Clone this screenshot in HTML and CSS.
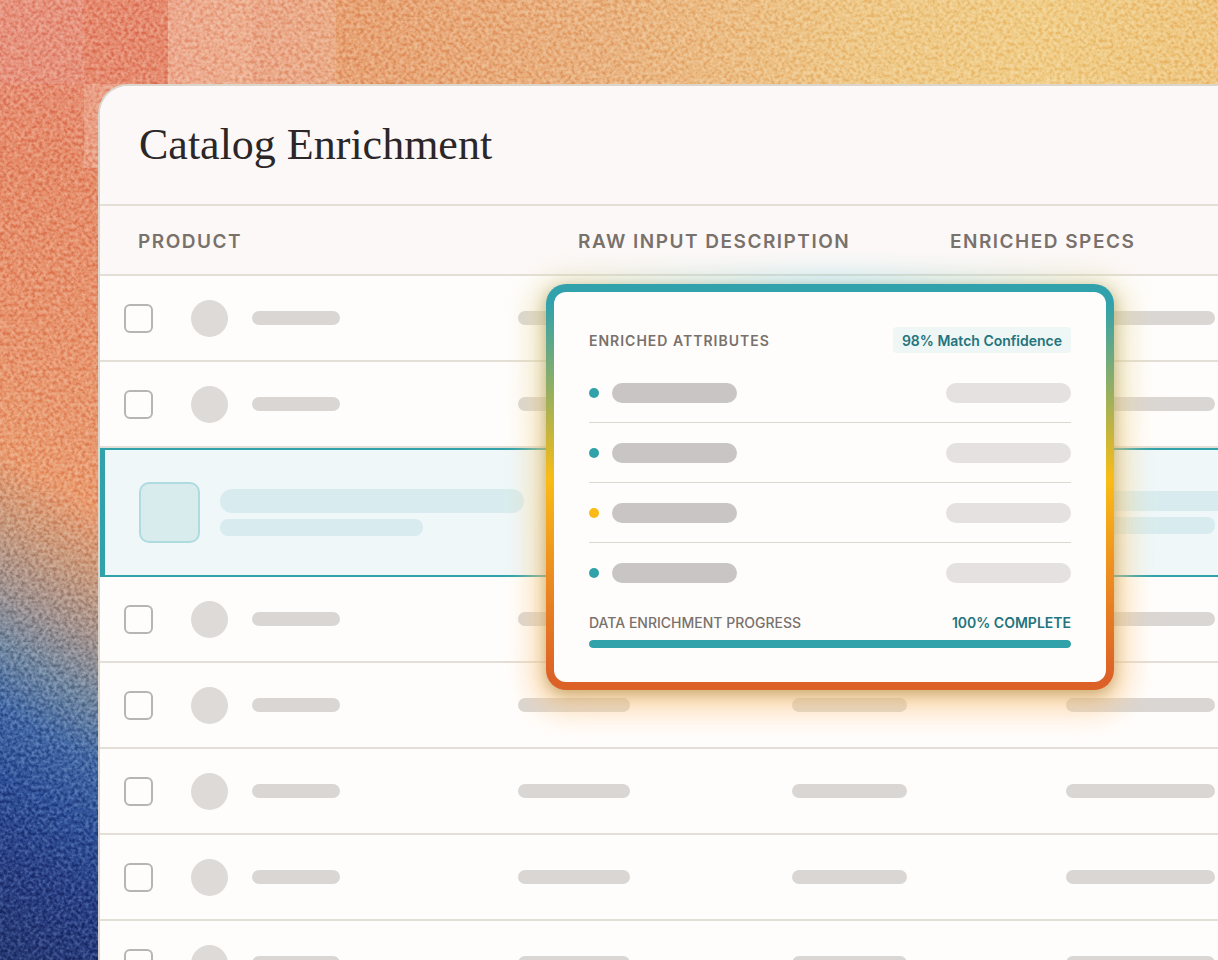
FILE: index.html
```html
<!DOCTYPE html>
<html lang="en">
<head>
<meta charset="utf-8">
<title>Catalog Enrichment</title>
<link rel="stylesheet" href="styles.css">
</head>
<body>
<div class="page">
  <svg class="backdrop" aria-hidden="true">
    <rect class="tile-rose" x="0" y="0" width="84" height="84"/>
    <rect class="tile-red" x="84" y="0" width="84" height="84"/>
    <rect class="tile-bright" x="168" y="0" width="84" height="84"/>
    <rect class="tile-pale" x="252" y="0" width="84" height="84"/>
    <rect class="tile-pale" x="84" y="84" width="84" height="84"/>
  </svg>
  <svg class="backdrop grain" aria-hidden="true">
    <filter id="grain" x="0" y="0" width="100%" height="100%" color-interpolation-filters="sRGB">
      <feTurbulence type="fractalNoise" baseFrequency="0.28" numOctaves="2" seed="7"/>
      <feColorMatrix values="2 0 0 0 -0.5  2 0 0 0 -0.5  2 0 0 0 -0.5  0 0 0 0 1"/>
    </filter>
    <rect width="100%" height="100%" filter="url(#grain)"/>
  </svg>

  <main class="panel">
    <header class="panel-header"><h1>Catalog Enrichment</h1></header>
    <table class="catalog">
      <thead>
        <tr class="head-row"><th scope="col">PRODUCT</th><th scope="col">RAW INPUT DESCRIPTION</th><th scope="col">ENRICHED SPECS</th></tr>
      </thead>
      <tbody>
        <tr class="row"><td class="product"><input type="checkbox" aria-label="Select row 1"><span class="avatar"></span><span class="bar name"></span></td><td><span class="bar raw"></span></td><td><span class="bar specs"></span></td><td><span class="bar status"></span></td></tr>
        <tr class="row"><td class="product"><input type="checkbox" aria-label="Select row 2"><span class="avatar"></span><span class="bar name"></span></td><td><span class="bar raw"></span></td><td><span class="bar specs"></span></td><td><span class="bar status"></span></td></tr>
        <tr class="row active"><td class="product"><span class="thumb"></span><span class="lines"><span class="line title"></span><span class="line subtitle"></span></span></td><td></td><td></td><td><span class="lines"><span class="line wide"></span><span class="line short"></span></span></td></tr>
        <tr class="row"><td class="product"><input type="checkbox" aria-label="Select row 4"><span class="avatar"></span><span class="bar name"></span></td><td><span class="bar raw"></span></td><td><span class="bar specs"></span></td><td><span class="bar status"></span></td></tr>
        <tr class="row"><td class="product"><input type="checkbox" aria-label="Select row 5"><span class="avatar"></span><span class="bar name"></span></td><td><span class="bar raw"></span></td><td><span class="bar specs"></span></td><td><span class="bar status"></span></td></tr>
        <tr class="row"><td class="product"><input type="checkbox" aria-label="Select row 6"><span class="avatar"></span><span class="bar name"></span></td><td><span class="bar raw"></span></td><td><span class="bar specs"></span></td><td><span class="bar status"></span></td></tr>
        <tr class="row"><td class="product"><input type="checkbox" aria-label="Select row 7"><span class="avatar"></span><span class="bar name"></span></td><td><span class="bar raw"></span></td><td><span class="bar specs"></span></td><td><span class="bar status"></span></td></tr>
        <tr class="row"><td class="product"><input type="checkbox" aria-label="Select row 8"><span class="avatar"></span><span class="bar name"></span></td><td><span class="bar raw"></span></td><td><span class="bar specs"></span></td><td><span class="bar status"></span></td></tr>
      </tbody>
    </table>

    <aside class="popover">
      <div class="card">
        <div class="card-header">
          <h2>ENRICHED ATTRIBUTES</h2>
          <span class="badge">98% Match Confidence</span>
        </div>
        <ul class="attributes">
          <li><span class="dot"></span><span class="pill key"></span><span class="pill value"></span></li>
          <li><span class="dot"></span><span class="pill key"></span><span class="pill value"></span></li>
          <li><span class="dot warn"></span><span class="pill key"></span><span class="pill value"></span></li>
          <li><span class="dot"></span><span class="pill key"></span><span class="pill value"></span></li>
        </ul>
        <div class="progress-labels">
          <label for="enrichment">DATA ENRICHMENT PROGRESS</label>
          <span class="complete">100% COMPLETE</span>
        </div>
        <progress id="enrichment" value="100" max="100"></progress>
      </div>
    </aside>
  </main>
</div>
</body>
</html>
```
FILE: styles.css
```css
:root {
  --teal: #31a2a9;
  --teal-dark: #23747c;
  --line: #e3ded6;
  --text-muted: #78716c;
  --surface: #fffdfc;
}
* { box-sizing: border-box; }
body {
  margin: 0;
  font-family: Inter, "Liberation Sans", sans-serif;
}
h1, h2, ul { margin: 0; padding: 0; }

/* Backdrop */
.page {
  position: relative;
  isolation: isolate;
  height: 100vh;
  overflow: hidden;
  padding: 84px 0 0 98px;
  background:
    linear-gradient(211deg, rgba(233,158,115,0) 42%, #e99c70 50%, #c89a7e 57%, #a3938f 63%, #7187a0 69%, #4268a4 75%, #2f5098 82%, #293f84 90%, #263874 100%) 0 0 / 100px 100% no-repeat,
    linear-gradient(180deg, rgba(228,136,102,0) 80px, #e58c6a 160px, #e8986f 400px) 0 0 / 100px 100% no-repeat,
    linear-gradient(90deg, #e68d72 0, #e68d70 160px, #e7a273 340px, #e9b27f 600px, #eec887 860px, #f0cd87 1040px, #eec680 100%);
}
.backdrop {
  position: absolute;
  inset: 0;
  z-index: -1;
  width: 100%;
  height: 100%;
}
.tile-rose { fill: rgba(232,165,160,.25); }
.tile-red { fill: rgba(228,128,108,.18); }
.tile-bright { fill: rgba(250,220,200,.34); }
.tile-pale { fill: rgba(242,195,175,.36); }
.grain { mix-blend-mode: soft-light; opacity: .5; }

/* Panel */
.panel {
  position: relative;
  height: 100%;
  border: 2px solid #dcd5cc;
  border-width: 2px 0 0 2px;
  border-radius: 30px 0 0 0;
  background: var(--surface);
}
.panel-header {
  display: flex;
  align-items: center;
  height: 120px;
  padding-left: 39px;
  border-bottom: 2px solid var(--line);
  border-radius: 28px 0 0 0;
  background: #fcf8f7;
}
h1 {
  font: 400 44px/52px "Liberation Serif", serif;
  color: #2b2627;
}

/* Table */
.catalog, .catalog thead, .catalog tbody { display: block; }
.head-row {
  display: grid;
  grid-template-columns: 478fr 372fr 268fr;
  align-items: center;
  height: 70px;
  padding-top: 4px;
  border-bottom: 2px solid var(--line);
  background: #fcf8f7;
}
.head-row th {
  padding: 0;
  text-align: left;
  font-size: 19px;
  line-height: 24px;
  font-weight: 600;
  letter-spacing: 1.5px;
  white-space: nowrap;
  color: var(--text-muted);
}
.head-row th:first-child { padding-left: 38px; }
.row {
  display: grid;
  grid-template-columns: 418fr 274fr 274fr 152fr;
  align-items: center;
  height: 86px;
  border-bottom: 2px solid var(--line);
}
.row td { display: flex; min-width: 0; padding: 0; }
.row .product { align-items: center; padding-left: 24px; }
input[type="checkbox"] {
  appearance: none;
  width: 29px;
  height: 29px;
  margin: 0 38px 0 0;
  border: 2px solid #b8b4b3;
  border-radius: 6px;
  background: var(--surface);
}
.avatar {
  width: 37px;
  height: 37px;
  margin-right: 24px;
  border-radius: 50%;
  background: #dedad7;
}
.bar { height: 14px; border-radius: 7px; background: #dad6d3; }
.name { width: 88px; }
.raw { width: 112px; }
.specs { width: 115px; }
.status { width: 149px; }

.row.active {
  height: 129px;
  border-top: 2px solid var(--teal);
  border-bottom-color: var(--teal);
  box-shadow: inset 5px 0 var(--teal);
  background: #eff7f9;
}
.active .product { padding-left: 39px; }
.thumb {
  flex: none;
  width: 61px;
  height: 61px;
  margin-right: 20px;
  border: 2px solid #b0dbde;
  border-radius: 10px;
  background: #d8ecee;
}
.lines { display: flex; flex-direction: column; gap: 6px; }
.line { height: 17px; border-radius: 8px; background: #d8ecef; }
.title { width: 304px; height: 24px; border-radius: 12px; }
.subtitle { width: 203px; }
.wide { width: 274px; height: 20px; border-radius: 10px; }
.short { width: 149px; }

/* Enrichment popover */
.popover {
  position: absolute;
  top: 198px;
  left: 446px;
  width: 568px;
}
.popover::before {
  content: "";
  position: absolute;
  inset: -4px -12px -20px;
  border-radius: 30px;
  background:
    linear-gradient(rgba(236,200,110,0) 20%, #f8d188 50%, #fbc888 100%),
    radial-gradient(ellipse 50% 50% at 50% 0, #8ccfd8 10%, #e6d79c);
  filter: blur(15px);
  opacity: .72;
}
.card {
  position: relative;
  padding: 35px 35px 34px;
  border: 8px solid transparent;
  border-radius: 20px;
  background:
    linear-gradient(var(--surface), var(--surface)) padding-box,
    linear-gradient(#31a2ac 5%, #fabc15 48%, #ee9020 70%, #dc6127 97%) border-box;
  box-shadow: 0 4px 14px rgba(120,100,30,.38);
}
.card-header {
  display: flex;
  align-items: center;
  justify-content: space-between;
  margin-bottom: 10px;
}
h2 {
  padding-top: 2px;
  font-size: 14px;
  line-height: 20px;
  font-weight: 600;
  letter-spacing: 1px;
  color: var(--text-muted);
}
.badge {
  padding: 4px 9px 2px;
  border-radius: 4px;
  background: #eff6f6;
  font-size: 14px;
  line-height: 20px;
  font-weight: 600;
  color: var(--teal-dark);
}
.attributes { list-style: none; }
.attributes li {
  display: flex;
  align-items: center;
  height: 60px;
  border-bottom: 1px solid #dcd8d0;
}
.attributes li:last-child { border-bottom: 0; }
.dot {
  width: 10px;
  height: 10px;
  margin-right: 13px;
  border-radius: 50%;
  background: var(--teal);
}
.warn { background: #f9ba18; }
.pill { width: 125px; height: 20px; border-radius: 10px; }
.key { background: #c9c5c4; }
.value { margin-left: auto; background: #e5e1e0; }
.progress-labels {
  display: flex;
  justify-content: space-between;
  margin: 10px 0 7px;
  font-size: 14px;
  line-height: 20px;
  font-weight: 500;
  color: var(--text-muted);
}
.complete { font-weight: 600; color: var(--teal-dark); }
progress {
  appearance: none;
  display: block;
  width: 100%;
  height: 8px;
  border: 0;
  border-radius: 4px;
  overflow: hidden;
  background: #e5e1e0;
}
progress::-webkit-progress-bar { background: #e5e1e0; }
progress::-webkit-progress-value { background: var(--teal); border-radius: 4px; }
```
